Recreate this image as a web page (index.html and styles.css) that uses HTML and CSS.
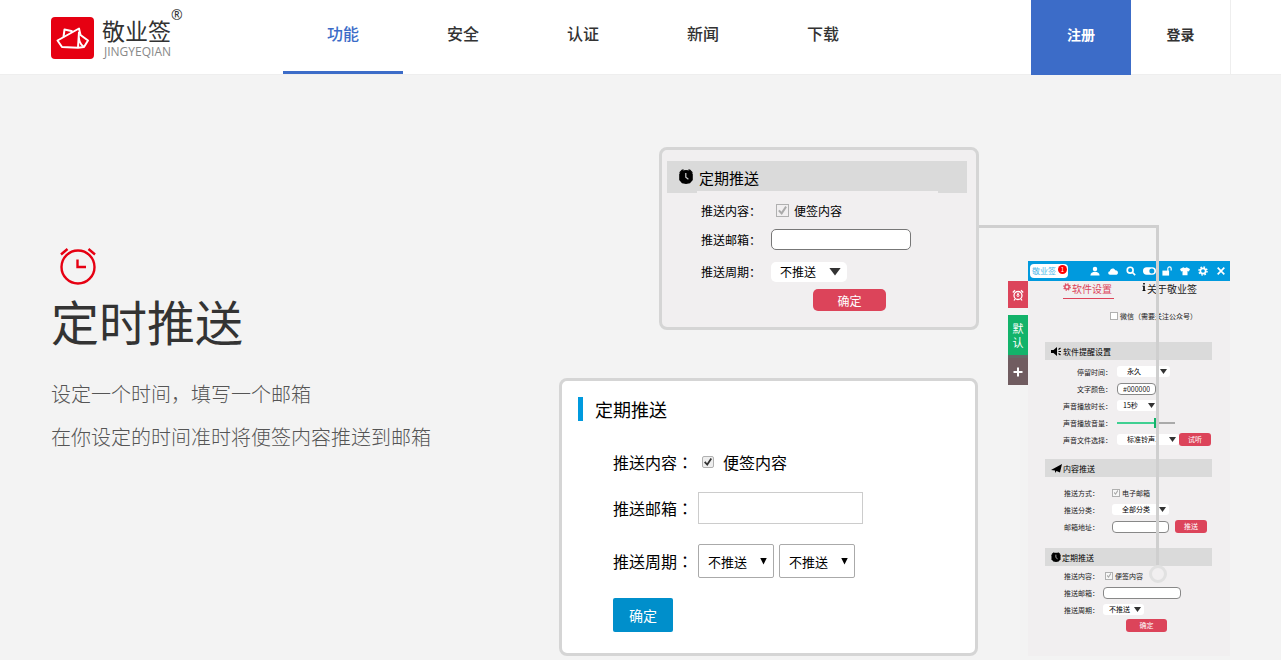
FILE: index.html
```html
<!DOCTYPE html>
<html lang="zh-CN">
<head>
<meta charset="utf-8">
<title>敬业签</title>
<link rel="stylesheet" href="styles.css">
</head>
<body>
<svg class="defs" aria-hidden="true">
  <symbol id="clock" viewBox="0 0 14 15">
    <path d="M3 1.500 7 1l4 .5 2.800 3.500v6L11 14.300 7 15l-4-.7L.2 11V5z"/><path d="M.3 3.200 3 .6h2L1 4.600zM13.700 3.200 11 .6H9l4 4z"/>
    <path d="M6.800 4v4.300l2.600 2" fill="none" stroke="#ccc" stroke-width="1.200"/>
  </symbol>
  <symbol id="gear" viewBox="0 0 12 12">
    <circle cx="6" cy="6" r="3.200" fill="none" stroke="currentColor" stroke-width="2"/>
    <circle cx="6" cy="6" r="4.800" fill="none" stroke="currentColor" stroke-width="1.800" stroke-dasharray="1.900 1.870"/>
  </symbol>
</svg>

<header class="header">
  <a class="logo" href="#">
    <svg class="logo-mark" viewBox="0 0 43 42" aria-hidden="true">
      <rect width="43" height="42" rx="4" fill="#e60012"/>
      <g fill="none" stroke="#fff" stroke-width="2" stroke-linejoin="round">
        <path d="M6.500 23.500 28 11.500l1.500 6.500 7.500 5.500-4 6.500-6 .8L11 30z"/>
        <path d="M12.500 20 13.500 12.500l8 1.700M28 11.500M28 15c-1 7 .5 12 5 15M28 15l-1 15.500"/>
      </g>
    </svg>
    <span class="logo-words"><span class="logo-cn">敬业签</span><span class="logo-en">JINGYEQIAN</span></span>
    <span class="logo-reg">®</span>
  </a>
  <nav class="nav">
    <a class="nav-link is-active" href="#">功能</a>
    <a class="nav-link" href="#">安全</a>
    <a class="nav-link" href="#">认证</a>
    <a class="nav-link" href="#">新闻</a>
    <a class="nav-link" href="#">下载</a>
  </nav>
  <div class="account">
    <a class="account-link register" href="#">注册</a>
    <a class="account-link login" href="#">登录</a>
  </div>
</header>

<main class="hero">
  <section class="intro">
    <svg class="intro-icon" viewBox="0 0 38 38" fill="none" stroke="#e60012" stroke-width="2.400" aria-hidden="true">
      <circle cx="19" cy="20" r="16.500"/><path d="M18.500 12.500V20H27M2 7.500 8.500 2M36 7.500 29.500 2"/>
    </svg>
    <h1 class="intro-title">定时推送</h1>
    <p class="intro-text">设定一个时间，填写一个邮箱</p>
    <p class="intro-text">在你设定的时间准时将便签内容推送到邮箱</p>
  </section>

  <div class="showcase">
    <div class="cards">
      <form class="zoom-card">
        <h2 class="zoom-head"><svg class="zoom-clock"><use href="#clock"/></svg>定期推送</h2>
        <div class="zoom-body">
          <div class="zoom-row">
            <span class="zoom-label">推送内容：</span>
            <input class="tick tick-zoom" type="checkbox" id="z-note" checked><label for="z-note">便签内容</label>
          </div>
          <div class="zoom-row">
            <label class="zoom-label" for="z-mail">推送邮箱：</label>
            <input class="zoom-input" type="text" id="z-mail">
          </div>
          <div class="zoom-row zoom-row-tall">
            <label class="zoom-label" for="z-cycle">推送周期：</label>
            <span class="pick pick-zoom"><select id="z-cycle"><option>不推送</option></select></span>
          </div>
          <button class="zoom-button" type="button">确定</button>
        </div>
      </form>

      <form class="web-card">
        <h2 class="web-head">定期推送</h2>
        <div class="web-body">
          <div class="web-row web-row-short">
            <span class="web-label">推送内容<span class="wide-mark" lang="zh-TW">：</span></span>
            <input class="tick tick-web" type="checkbox" id="w-note" checked><label for="w-note">便签内容</label>
          </div>
          <div class="web-row">
            <label class="web-label" for="w-mail">推送邮箱<span class="wide-mark" lang="zh-TW">：</span></label>
            <input class="web-input" type="text" id="w-mail">
          </div>
          <div class="web-row">
            <label class="web-label" for="w-cycle">推送周期<span class="wide-mark" lang="zh-TW">：</span></label>
            <span class="pick pick-web"><select id="w-cycle"><option>不推送</option></select></span>
            <span class="pick pick-web"><select aria-label="推送时间"><option>不推送</option></select></span>
          </div>
          <button class="web-button" type="button">确定</button>
        </div>
      </form>
    </div>

    <div class="app">
      <div class="side">
        <button class="side-alarm" type="button" aria-label="提醒">
          <svg width="12" height="12" viewBox="0 0 12 12" fill="none" stroke="#fff"><circle cx="6" cy="6.500" r="4" stroke-width="1.300"/><circle cx="6" cy="6.500" r="1"/><path d="M6 6V4M.8 3.500 3 1.200M11.200 3.500 9 1.200M3 10l-1 1.500M9 10l1 1.500" stroke-width="1.300"/></svg>
        </button>
        <button class="side-default" type="button">默认</button>
        <button class="side-add" type="button" aria-label="添加">
          <svg width="10" height="10" viewBox="0 0 10 10"><path d="M5 .5v9M.5 5h9" stroke="#fff" stroke-width="2"/></svg>
        </button>
      </div>
      <div class="panel">
        <div class="bar">
          <span class="bar-logo">敬业签<span class="bar-badge">1</span></span>
          <div class="bar-icons">
            <svg viewBox="0 0 12 12"><circle cx="6" cy="3.500" r="2.700"/><path d="M.5 11.500c0-3 2.500-4.500 5.500-4.500s5.500 1.500 5.500 4.500z"/></svg>
            <svg viewBox="0 0 12 12"><path d="M2.500 10.500C-.5 10-.3 6.500 2.200 6.300 2.500 2.500 7.500 1.500 8.700 5.200 12.500 5 13 10 10 10.500z"/></svg>
            <svg viewBox="0 0 12 12" fill="none" stroke="#fff" stroke-width="2"><circle cx="5" cy="5" r="3.500"/><path d="m7.500 7.500 3.500 3.500"/></svg>
            <svg class="bar-toggle" viewBox="0 0 14 12"><rect x="0" y="2" width="14" height="8" rx="4"/><circle cx="9.500" cy="6" r="2.700" fill="#009ade"/></svg>
            <svg viewBox="0 0 12 12"><path d="M.5 5.500h8v6h-8z"/><path d="M7 6V3a2 2 0 0 1 4 0v2.500" fill="none" stroke="#fff" stroke-width="1.400"/></svg>
            <svg viewBox="0 0 12 12"><path d="M4 1.500q2 1.500 4 0l4 2-1.300 3L9 6v5H3V6l-1.700.5L0 3.500z"/></svg>
            <svg class="white"><use href="#gear"/></svg>
            <svg viewBox="0 0 12 12"><path d="m2 2 8 8m0-8-8 8" stroke="#fff" stroke-width="2"/></svg>
          </div>
        </div>
        <div class="tabs">
          <a class="tab is-current" href="#"><svg class="tab-gear"><use href="#gear"/></svg>软件设置</a>
          <a class="tab" href="#"><svg class="tab-info" viewBox="0 0 4 10"><path d="M1 0h2v2H1zM0 3.500h3V9h1v1H0V9h1V4.500H0z"/></svg>关于敬业签</a>
        </div>
        <div class="wechat"><input class="tick tick-app" type="checkbox" id="a-wx"><label for="a-wx">微信（需要关注公众号）</label></div>

        <h3 class="app-head"><svg width="11" height="9" viewBox="0 0 11 9"><path d="M0 3h2.500L6 0v9L2.500 6H0z"/><path d="M7.500 2.500 9.500 1M7.500 4.500H10M7.500 6.500l2 1.500" stroke="#000" stroke-width="1.200"/></svg>软件提醒设置</h3>
        <div class="app-rows rows-sound">
          <div class="app-row"><label for="a-stay">停留时间：</label><span class="pick pick-app w-53"><select id="a-stay"><option>永久</option></select></span></div>
          <div class="app-row"><label for="a-color">文字颜色：</label><input class="app-input w-39" type="text" id="a-color" value="#000000"></div>
          <div class="app-row"><label for="a-long">声音播放时长：</label><span class="pick pick-app w-41"><select id="a-long"><option>15秒</option></select></span></div>
          <div class="app-row"><label for="a-vol">声音播放音量：</label><input class="volume" type="range" id="a-vol" value="66"></div>
          <div class="app-row"><label for="a-file">声音文件选择：</label><span class="pick pick-app w-62"><select id="a-file"><option>标准铃声1</option></select></span><button class="app-button" type="button">试听</button></div>
        </div>

        <h3 class="app-head"><svg width="11" height="9" viewBox="0 0 11 9"><path d="M0 6 11 0 9 8.500 5.500 7 4 9V6.500z"/></svg>内容推送</h3>
        <div class="app-rows rows-push">
          <div class="app-row"><span class="app-label">推送方式：</span><input class="tick tick-app" type="checkbox" id="a-mail" checked><label for="a-mail">电子邮箱</label></div>
          <div class="app-row"><label class="app-label" for="a-kind">推送分类：</label><span class="pick pick-app w-57"><select id="a-kind"><option>全部分类</option></select></span></div>
          <div class="app-row"><label class="app-label" for="a-addr">邮箱地址：</label><input class="app-input w-57" type="text" id="a-addr"><button class="app-button push" type="button">推送</button></div>
        </div>

        <h3 class="app-head"><svg width="10" height="10"><use href="#clock"/></svg>定期推送</h3>
        <div class="app-rows rows-timed">
          <div class="app-row"><span class="app-label">推送内容：</span><input class="tick tick-app" type="checkbox" id="a-note" checked><label for="a-note">便签内容</label></div>
          <div class="app-row"><label class="app-label" for="a-box">推送邮箱：</label><input class="app-input w-78" type="text" id="a-box"></div>
          <div class="app-row"><label class="app-label" for="a-cycle">推送周期：</label><span class="pick pick-app w-41"><select id="a-cycle"><option>不推送</option></select></span></div>
          <button class="app-button confirm" type="button">确定</button>
        </div>
      </div>
    </div>

    <svg class="connector" viewBox="0 0 190 360" fill="none" stroke="#cfcfcf" stroke-width="3" aria-hidden="true">
      <path d="M0 1.500H178.500V340"/><circle cx="179" cy="349" r="7.500" stroke="#e1e1e1"/>
    </svg>
  </div>
</main>
</body>
</html>
```
FILE: styles.css
```css
* { box-sizing: border-box; }

body {
  margin: 0;
  background: #f3f3f3;
  color: #333;
  font-family: "Noto Sans CJK SC", "Liberation Sans", sans-serif;
}

a { color: inherit; text-decoration: none; }
h1, h2, h3, p { margin: 0; font-weight: 400; }
button, input, select { margin: 0; padding: 0; border: 0; font: inherit; color: inherit; }
svg { flex: none; }
.defs { position: absolute; width: 0; height: 0; }
.wide-mark { font-family: "Noto Sans CJK TC", sans-serif; }

/* Header */
.header {
  display: flex;
  height: 75px;
  padding: 0 50px 0 51px;
  background: #fff;
  border-bottom: 1px solid #eee;
}
.logo { display: flex; width: 232px; padding-top: 17px; }
.logo-mark { width: 43px; height: 42px; }
.logo-words { display: flex; flex-direction: column; margin-left: 8px; }
.logo-cn { font-size: 23px; line-height: 26px; }
.logo-en { padding-left: 2px; font: 12px/18px "Open Sans", sans-serif; color: #888; }
.logo-reg { margin-top: -9px; font: 14px/14px "Open Sans", sans-serif; }
.nav { display: flex; flex: 1; }
.nav-link {
  width: 120px;
  height: 74px;
  border-bottom: 3px solid transparent;
  font-size: 16px;
  font-weight: 500;
  line-height: 67px;
  text-align: center;
}
.nav-link.is-active { color: #3c6cc8; border-color: #3c6cc8; }
.account { display: flex; height: 75px; }
.account-link {
  width: 100px;
  font-size: 14px;
  font-weight: 700;
  line-height: 69px;
  text-align: center;
}
.register { background: #3c6cc8; color: #fff; }
.login { height: 74px; border-right: 1px solid #eee; }

/* Hero */
.hero { display: flex; padding: 72px 51px 4px; }
.intro { flex: 1; padding-top: 100px; white-space: nowrap; }
.intro-icon { display: block; width: 38px; height: 38px; margin-left: 8px; }
.intro-title { margin-bottom: 17px; font-size: 48px; line-height: 70px; }
.intro-text { font-size: 20px; line-height: 43px; font-weight: 300; color: #555; }
.showcase { position: relative; display: flex; }
.cards { display: flex; flex-direction: column; gap: 48px; width: 420px; }

/* Select with a drawn arrow */
.pick { display: inline-grid; align-items: center; background: #fff; color: #000; }
.pick select {
  grid-area: 1 / 1;
  width: 100%;
  height: 100%;
  appearance: none;
  background: none;
}
.pick::after {
  content: "";
  grid-area: 1 / 1;
  justify-self: end;
  background: #333;
  clip-path: polygon(0 0, 100% 0, 50% 100%);
  pointer-events: none;
}

/* Tick boxes */
.tick {
  display: grid;
  place-items: center;
  flex: none;
  appearance: none;
  border: 1px solid #b0b0b0;
}
.tick:checked::before {
  content: "";
  width: 80%;
  height: 80%;
  background: #aaa;
  clip-path: polygon(0 55%, 18% 42%, 38% 65%, 82% 0, 100% 12%, 42% 100%);
}

/* Enlarged push settings */
.zoom-card {
  align-self: flex-end;
  width: 320px;
  padding: 11px 9px 16px 5px;
  background: #f1eff0;
  border: 3px solid #d5d5d5;
  border-radius: 8px;
  font-size: 12px;
  color: #000;
}
.zoom-head {
  display: flex;
  gap: 6px;
  height: 32px;
  padding: 0 12px;
  background: #dadada;
  font-size: 15px;
  line-height: 34px;
}
.zoom-clock { width: 14px; height: 15px; margin-top: 8px; }
.zoom-body { margin: -2px 29px 0 30px; padding: 5px 0 0 4px; background: #f1eff0; }
.zoom-row { display: flex; align-items: center; height: 29px; }
.zoom-row-tall { height: 35px; }
.zoom-label { width: 70px; }
.tick-zoom { width: 13px; height: 13px; margin: 0 5px; }
.zoom-input { width: 140px; height: 21px; padding: 0 6px; background: #fff; border: 1px solid #777; border-radius: 5px; }
.pick-zoom { width: 76px; height: 20px; border-radius: 5px; }
.pick-zoom select { padding-left: 9px; }
.pick-zoom::after { width: 12px; height: 8px; margin-right: 6px; }
.zoom-button {
  display: block;
  width: 73px;
  height: 22px;
  margin-left: 112px;
  background: #dc445a;
  border-radius: 5px;
  color: #fff;
  line-height: 24px;
}

/* Web form */
.web-card {
  width: 419px;
  padding: 16px 16px 21px;
  background: #fff;
  border: 3px solid #d5d5d5;
  border-radius: 8px;
  font-size: 16px;
  color: #000;
}
.web-head { padding-left: 12px; border-left: 5px solid #009ade; font-size: 18px; line-height: 24px; }
.web-body { display: flex; flex-direction: column; align-items: flex-start; gap: 20px; padding: 31px 0 0 35px; }
.web-row { display: flex; align-items: center; gap: 5px; white-space: nowrap; }
.web-row-short { height: 20px; line-height: 20px; }
.web-label { width: 80px; }
.tick-web { width: 12px; height: 12px; margin: 0 4px; border-radius: 2px; background: #eee; }
.tick-web:checked::before { background: #333; }
.web-input { width: 165px; height: 32px; padding: 0 8px; border: 1px solid #ccc; background: #fff; }
.pick-web { width: 76px; height: 34px; border: 1px solid #aaa; border-radius: 2px; font-size: 13px; }
.pick-web select { padding-left: 9px; }
.pick-web::after { width: 7px; height: 7px; margin-right: 6px; background: #000; }
.web-button { width: 60px; height: 34px; background: #008fcb; border-radius: 2px; color: #fff; font-size: 14px; }

/* Desktop app */
.app { display: flex; align-items: flex-start; margin: 114px 0 0 29px; font-size: 7px; color: #222; }
.side { display: flex; flex-direction: column; width: 20px; padding-top: 20px; color: #fff; }
.side-alarm { display: grid; place-items: center; height: 27px; margin-bottom: 7px; background: #dc445a; }
.side-default { height: 40px; padding: 0 4px; background: #12b36a; font-size: 11px; line-height: 14px; }
.side-add { display: grid; place-items: center; height: 30px; background: #705c60; border-top: 3px solid #666; }
.panel { width: 202px; height: 395px; background: #f1eff0; }
.bar { display: flex; align-items: center; justify-content: space-between; height: 20px; padding: 0 4px 0 2px; background: #009ade; }
.bar-logo {
  position: relative;
  width: 38px;
  height: 14px;
  padding-left: 2px;
  background: #fff;
  border-radius: 4px;
  color: #4db8e8;
  font-size: 8px;
  line-height: 14px;
}
.bar-badge {
  position: absolute;
  top: 1px;
  right: 1px;
  width: 9px;
  height: 9px;
  border-radius: 50%;
  background: #f00;
  color: #fff;
  font-size: 6px;
  line-height: 9px;
  text-align: center;
}
.bar-icons { display: flex; align-items: center; gap: 8px; fill: #fff; }
.bar-icons svg { width: 10px; height: 10px; }
.bar-icons .bar-toggle { width: 13px; height: 12px; margin: 0 -2px 0 -1px; }
.white { color: #fff; }
.tabs { display: flex; gap: 28px; padding-left: 35px; font-size: 10px; line-height: 16px; }
.tab { display: flex; gap: 1px; height: 18px; }
.tab.is-current { padding-right: 2px; border-bottom: 1px solid #dc445a; color: #dc445a; }
.tab-gear { width: 8px; height: 8px; margin-top: 2px; }
.tab-info { width: 4px; height: 8px; margin-top: 2px; }
.wechat { display: flex; align-items: center; gap: 2px; height: 17px; margin: 8px 0 18px 82px; }
.tick-app { width: 8px; height: 8px; background: #f7f7f7; }
.wechat .tick-app { background: #fff; }
.app-head {
  display: flex;
  align-items: center;
  gap: 1px;
  height: 18px;
  margin: 0 18px 0 17px;
  padding-left: 6px;
  background: #dadada;
  font-size: 8px;
  color: #000;
}
.app-row { display: flex; align-items: center; height: 17px; white-space: nowrap; }
.rows-sound { padding: 3px 0 11px 17px; }
.rows-sound label { width: 67px; margin-right: 5px; text-align: right; }
.rows-push { padding: 7px 0 13px 36px; }
.rows-push .app-label { width: 48px; }
.rows-timed { padding: 1px 0 0 36px; }
.rows-timed .app-label { width: 39px; }
.rows-push .tick-app, .rows-timed .tick-app { margin-right: 2px; }
.rows-timed .tick-app { margin-left: 2px; }
.pick-app { height: 11px; border-radius: 3px; }
.pick-app select { padding-left: 10px; line-height: 11px; }
.pick-app.w-41 select { padding-left: 6px; }
.pick-app::after { width: 7px; height: 5px; margin-right: 3px; }
.app-input { height: 12px; padding: 0 5px; background: #fff; border: 1px solid #888; border-radius: 4px; }
.w-39 { width: 39px; }
.w-41 { width: 41px; }
.w-53 { width: 53px; }
.w-57 { width: 57px; }
.w-62 { width: 62px; }
.w-78 { width: 78px; }
.volume {
  width: 58px;
  height: 10px;
  appearance: none;
  background: linear-gradient(to right, #3fd092 66%, #aaa 66%) center / 100% 2px no-repeat;
}
.volume::-webkit-slider-thumb { appearance: none; width: 2px; height: 10px; background: #12b36a; }
.app-button { width: 32px; height: 13px; background: #dc445a; border-radius: 3px; color: #fff; line-height: 13px; }
.app-button.push { margin-left: 6px; }
.app-button.confirm { display: block; width: 41px; margin: 1px 0 0 62px; }

/* Line from the app to the enlarged card */
.connector { position: absolute; top: 78px; left: 420px; width: 190px; height: 360px; pointer-events: none; }
```
